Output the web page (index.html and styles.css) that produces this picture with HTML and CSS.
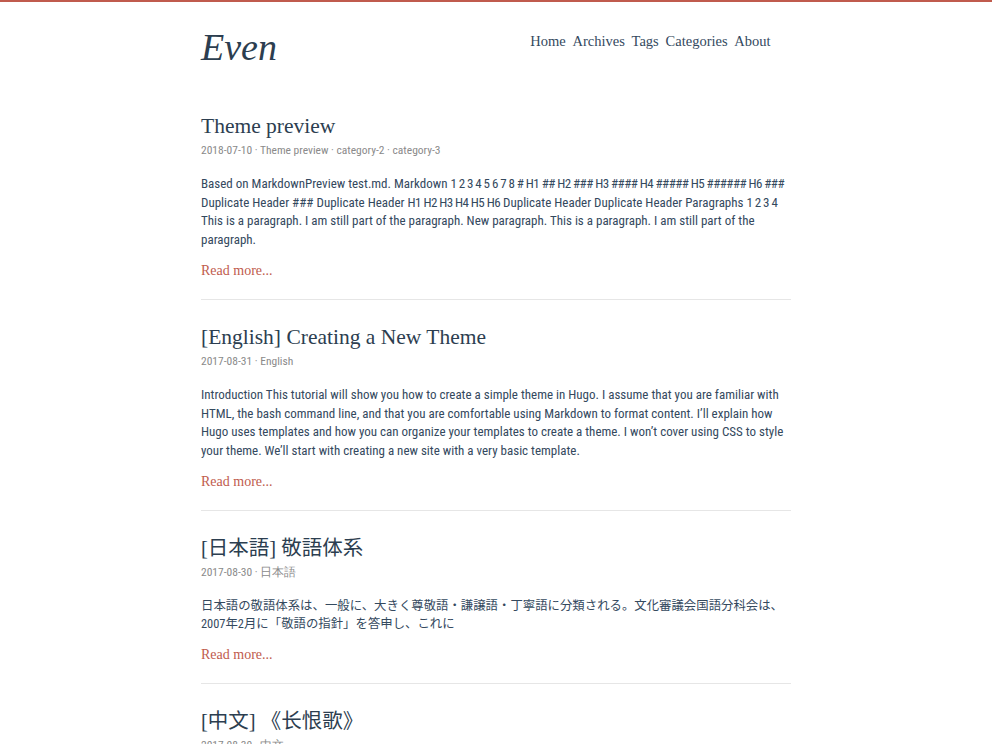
FILE: index.html
```html
<!DOCTYPE html>
<html lang="en">
<head>
    <meta charset="UTF-8">
    <title>Even</title>
    <link rel="stylesheet" href="styles.css">
</head>
<body>
    <div class="page">
        <header class="header">
            <a class="logo" href="#">Even</a>
            <nav class="menu">
                <a class="menu-item" href="#">Home</a>
                <a class="menu-item" href="#">Archives</a>
                <a class="menu-item" href="#">Tags</a>
                <a class="menu-item" href="#">Categories</a>
                <a class="menu-item" href="#">About</a>
            </nav>
        </header>

        <main class="posts">
            <article class="post">
                <h1 class="post-title"><a href="#">Theme preview</a></h1>
                <div class="post-meta">2018-07-10 · Theme preview · category-2 · category-3</div>
                <div class="post-summary">Based on MarkdownPreview test.md. Markdown <span class="tokens">1 2 3 4 5 6 7 8 # H1 ## H2 ### H3 #### H4 ##### H5 ###### H6 ###</span> Duplicate Header ### Duplicate Header <span class="tokens">H1 H2 H3 H4 H5 H6</span> Duplicate Header Duplicate Header Paragraphs <span class="tokens">1 2 3 4</span> This is a paragraph. I am still part of the paragraph. New paragraph. This is a paragraph. I am still part of the paragraph.</div>
                <a class="read-more" href="#">Read more...</a>
            </article>

            <article class="post">
                <h1 class="post-title"><a href="#">[English] Creating a New Theme</a></h1>
                <div class="post-meta">2017-08-31 · English</div>
                <div class="post-summary">Introduction This tutorial will show you how to create a simple theme in Hugo. I assume that you are familiar with HTML, the bash command line, and that you are comfortable using Markdown to format content. I’ll explain how Hugo uses templates and how you can organize your templates to create a theme. I won’t cover using CSS to style your theme. We’ll start with creating a new site with a very basic template.</div>
                <a class="read-more" href="#">Read more...</a>
            </article>

            <article class="post" lang="ja">
                <h1 class="post-title"><a href="#">[日本語] 敬語体系</a></h1>
                <div class="post-meta">2017-08-30 · 日本語</div>
                <div class="post-summary">日本語の敬語体系は、一般に、大きく尊敬語・謙譲語・丁寧語に分類される。文化審議会国語分科会は、2007年2月に「敬語の指針」を答申し、これに</div>
                <a class="read-more" href="#" lang="en">Read more...</a>
            </article>

            <article class="post" lang="zh">
                <h1 class="post-title"><a href="#">[中文] 《长恨歌》</a></h1>
                <div class="post-meta">2017-08-30 · 中文</div>
                <div class="post-summary">汉皇重色思倾国，御宇多年求不得。杨家有女初长成，养在深闺人未识。天生丽质难自弃，一朝选在君王侧。</div>
                <a class="read-more" href="#" lang="en">Read more...</a>
            </article>
        </main>
    </div>
</body>
</html>
```

FILE: styles.css
```css
body {
    margin: 0;
    border-top: 2px solid #c05b4d;
    background-color: #fff;
    color: #34495e;
    font-family: "Roboto Condensed", "DejaVu Sans Condensed", Lato, sans-serif;
}
a {
    text-decoration: none;
    color: inherit;
}
.page {
    width: 590px;
    margin: 0 auto;
}

/* header */
.header {
    display: flex;
    justify-content: space-between;
    align-items: flex-start;
    padding-top: 25px;
}
.logo {
    font-family: "Liberation Serif", serif;
    font-style: italic;
    font-size: 38px;
    line-height: 40px;
    color: #2c3e50;
}
.menu {
    display: flex;
    margin-top: 4px;
    padding-right: 17px;
}
.menu-item {
    font-family: "Liberation Serif", serif;
    font-size: 14.5px;
    line-height: 20px;
    margin: 0 3.4px;
    color: #34495e;
}

/* posts */
.posts {
    padding-top: 46px;
}
.post {
    padding-bottom: 18px;
    border-bottom: 1px solid #e6e6e6;
    margin-bottom: 24px;
}
.post-title {
    margin: 0;
    font-family: "Liberation Serif", "Noto Sans CJK JP", serif;
    font-weight: normal;
    font-size: 21.5px;
    line-height: 26px;
    color: #2c3e50;
}
.post:lang(ja) .post-title {
    font-size: 20.5px;
}
.post:lang(zh) .post-title {
    font-family: "Liberation Serif", "Noto Sans CJK SC", serif;
    font-size: 20.5px;
}
.post-meta {
    margin-top: 2px;
    font-size: 11.5px;
    line-height: 18px;
    color: #8a8a8a;
}
.post-summary {
    margin-top: 16px;
    font-size: 13px;
    line-height: 18.7px;
}
/* markdown heading markers and numbers sit tighter */
.post-summary .tokens {
    letter-spacing: -0.55px;
}
.post-summary:lang(ja) {
    font-family: "Roboto Condensed", "Noto Sans CJK JP", sans-serif;
    font-size: 12.4px;
}
.post-summary:lang(zh) {
    font-family: "Roboto Condensed", "Noto Sans CJK SC", sans-serif;
    font-size: 12.4px;
}
.read-more {
    display: inline-block;
    margin-top: 11px;
    font-family: "Liberation Serif", serif;
    font-size: 14px;
    line-height: 20px;
    color: #c05b4d;
}
```
